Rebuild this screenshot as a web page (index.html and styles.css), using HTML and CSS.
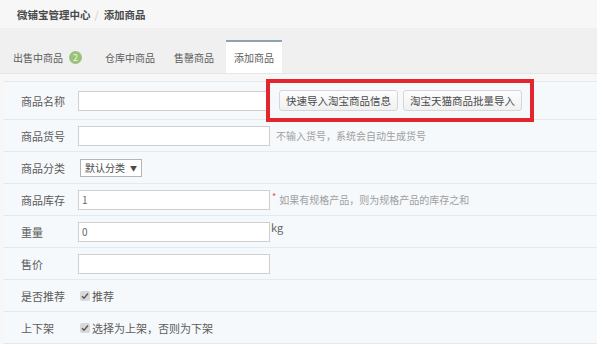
FILE: index.html
```html
<!DOCTYPE html>
<html lang="zh-CN">
<head>
    <meta charset="UTF-8">
    <title>添加商品</title>
    <link rel="stylesheet" href="styles.css">
</head>
<body>
    <div class="page">
        <div class="crumb">
            <b>微铺宝管理中心</b><span class="sep">/</span><b>添加商品</b>
        </div>
        <div class="tabs">
            <div class="tab">出售中商品<span class="badge">2</span></div>
            <div class="tab">仓库中商品</div>
            <div class="tab">售罄商品</div>
            <div class="tab active">添加商品</div>
        </div>
        <div class="form">
            <div class="row first">
                <div class="label">商品名称</div>
                <div class="field">
                    <input type="text" class="text">
                    <div class="mark">
                        <button>快速导入淘宝商品信息</button>
                        <button>淘宝天猫商品批量导入</button>
                    </div>
                </div>
            </div>
            <div class="row">
                <div class="label">商品货号</div>
                <div class="field">
                    <input type="text" class="text">
                    <span class="hint">不输入货号，系统会自动生成货号</span>
                </div>
            </div>
            <div class="row">
                <div class="label">商品分类</div>
                <div class="field">
                    <div class="select">默认分类<span class="arrow">▼</span></div>
                </div>
            </div>
            <div class="row">
                <div class="label">商品库存</div>
                <div class="field">
                    <input type="text" class="text" value="1">
                    <span class="star">*</span><span class="hint">如果有规格产品，则为规格产品的库存之和</span>
                </div>
            </div>
            <div class="row">
                <div class="label">重量</div>
                <div class="field">
                    <input type="text" class="text" value="0">
                    <span class="unit">kg</span>
                </div>
            </div>
            <div class="row">
                <div class="label">售价</div>
                <div class="field">
                    <input type="text" class="text">
                </div>
            </div>
            <div class="row">
                <div class="label">是否推荐</div>
                <div class="field">
                    <span class="check"><svg width="8" height="8" viewBox="0 0 8 8"><path d="M1 4.2l2 2L7 1.5" fill="none" stroke="#555" stroke-width="1.3"/></svg></span>推荐
                </div>
            </div>
            <div class="row">
                <div class="label">上下架</div>
                <div class="field">
                    <span class="check"><svg width="8" height="8" viewBox="0 0 8 8"><path d="M1 4.2l2 2L7 1.5" fill="none" stroke="#555" stroke-width="1.3"/></svg></span>选择为上架，否则为下架
                </div>
            </div>
        </div>
    </div>
</body>
</html>
```

FILE: styles.css
```css
body{
    margin: 0;
    padding: 0;
    background-color: #fff;
    font-family: "Noto Sans CJK SC", "Noto Sans", sans-serif;
    font-size: 11px;
    color: #5c5c5c;
}

.page{
    width: 597px;
    height: 344px;
    background-color: #f7f7f7;
    overflow: hidden;
}

.crumb{
    height: 28px;
    display: flex;
    align-items: center;
    padding-left: 17px;
    color: #4a4a4a;
    font-size: 10.5px;
}

.crumb b{
    font-weight: 700;
}

.sep{
    color: #ccc;
    margin: 0 5px 0 4px;
}

.tabs{
    height: 45px;
    display: flex;
    align-items: flex-end;
    background-color: #f0f0f0;
    padding-left: 6px;
    border-bottom: 1px solid #e6e6e6;
}

.tab{
    height: 32px;
    display: flex;
    align-items: center;
    padding: 0 7px;
    margin-right: 5px;
    color: #5c5c5c;
    font-size: 10px;
}

.tab:first-child{
    margin-right: 9px;
}

.tab.active{
    background-color: #fff;
    border-top: 2px solid #8ea3ad;
    height: 31px;
    padding: 0 8px;
    margin-left: 0;
}

.badge{
    display: inline-flex;
    justify-content: center;
    align-items: center;
    width: 13px;
    height: 13px;
    border-radius: 50%;
    background-color: #9bc27a;
    color: #eef5e6;
    font-size: 9px;
    margin-left: 6px;
}

.form{
    margin-top: 7px;
    margin-left: 4px;
    background-color: #f6f9fb;
    border-top: 1px solid #e4e9ed;
}

.row{
    display: flex;
    align-items: center;
    height: 31px;
    border-bottom: 1px solid #e4e9ed;
}

.row.first{
    height: 37px;
}

.label{
    width: 57px;
    padding-left: 17px;
    color: #5c5c5c;
}

.field{
    display: flex;
    align-items: center;
}

.text{
    width: 192px;
    height: 20px;
    box-sizing: border-box;
    border: 1px solid #cfcfcf;
    background-color: #fff;
    padding: 0 3px;
    font-family: inherit;
    font-size: 10px;
    color: #666;
    outline: none;
    margin: 0;
}

.mark{
    display: flex;
    align-items: center;
    gap: 5px;
    margin-left: -4px;
    padding: 7px 8px 7px 9px;
    border: 4px solid #e3262d;
}

.mark button{
    height: 21px;
    padding: 0 6px;
    border: 1px solid #d6d6d6;
    border-radius: 3px;
    background: linear-gradient(#fdfdfd, #f0f0f0);
    font-family: inherit;
    font-size: 10.5px;
    color: #4a4a4a;
}

.hint{
    margin-left: 6px;
    color: #a0a0a0;
    font-size: 10px;
}

.star{
    color: #e05050;
    margin-left: 2px;
    font-size: 9px;
    align-self: flex-start;
}

.star + .hint{
    margin-left: 3px;
}

.unit{
    align-self: flex-start;
    margin-left: 1px;
    margin-top: -3px;
    color: #666;
}

.select{
    display: flex;
    align-items: center;
    height: 16px;
    padding: 0 4px;
    margin-left: 2px;
    border: 1px solid #b5b5b5;
    background-color: #fff;
    color: #4a4a4a;
    font-size: 10px;
}

.arrow{
    font-size: 7px;
    margin-left: 5px;
}

.check{
    display: inline-flex;
    justify-content: center;
    align-items: center;
    width: 10px;
    height: 10px;
    margin: 0 2px 0 2px;
    border-radius: 2px;
    background-color: #d8d8d8;
}
```
